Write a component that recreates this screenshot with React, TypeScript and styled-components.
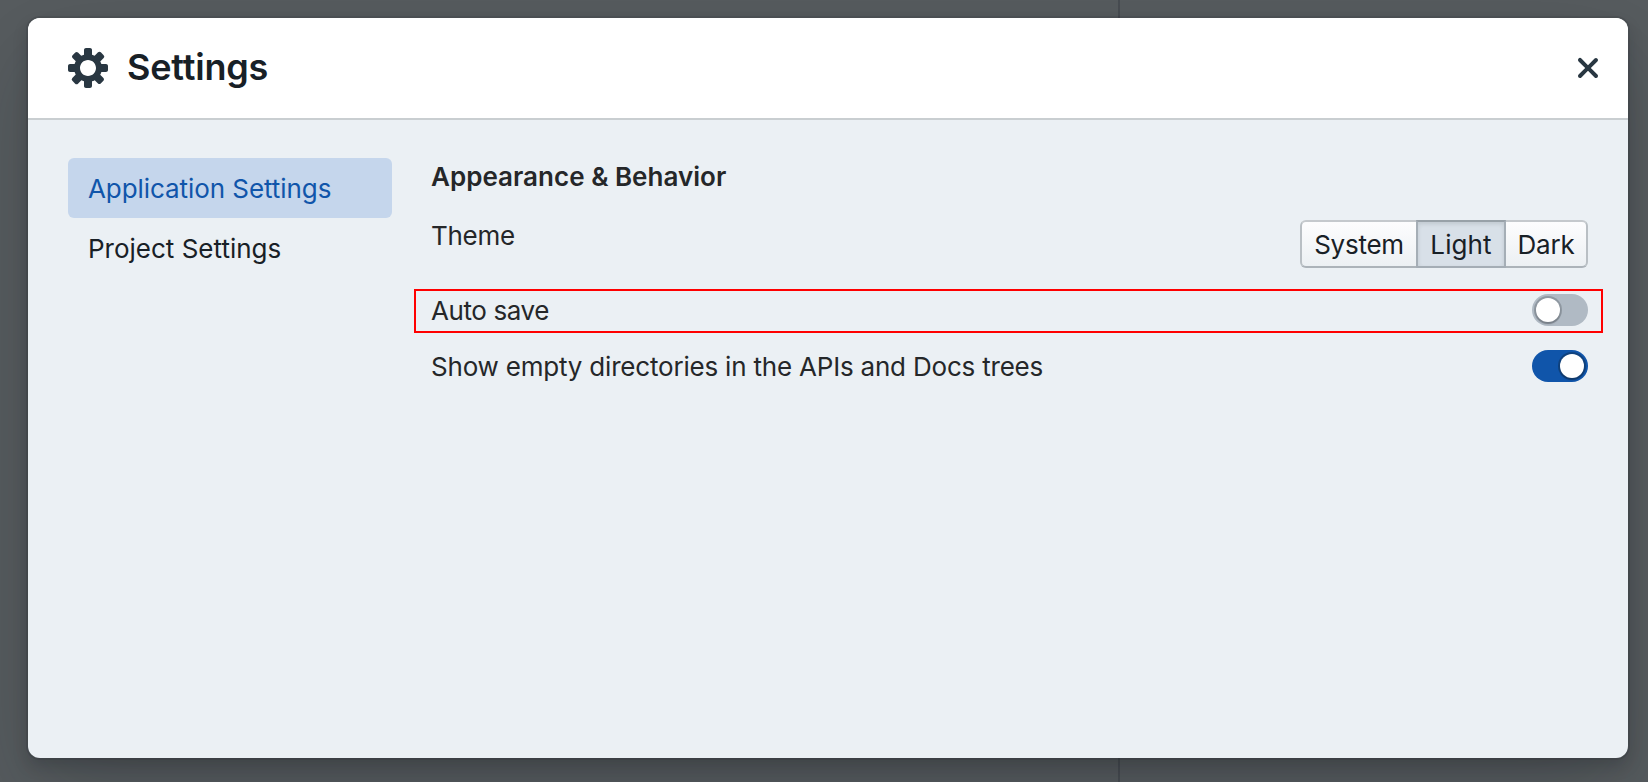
import React, { useState } from "react";
import styled, { createGlobalStyle, css } from "styled-components";

const GlobalStyle = createGlobalStyle`
  *, *::before, *::after { box-sizing: border-box; }
  body {
    margin: 0;
    overflow: hidden;
    font-family: Inter, "Liberation Sans", sans-serif;
    font-size: 26px;
    color: #252729;
  }
  button { font: inherit; letter-spacing: inherit; }
`;

const Backdrop = styled.main`
  height: 100vh;
  padding: 18px 20px 24px 28px;
  background: linear-gradient(to right, transparent 1118px, #484d52 1118px, #484d52 1120px, transparent 1120px) #575c5f;
`;

const Dialog = styled.section`
  display: flex;
  flex-direction: column;
  height: 740px;
  overflow: hidden;
  border-radius: 12px;
  background: #ebf0f4;
  box-shadow: 0 0 0 2px rgba(16, 22, 26, 0.1), 0 8px 16px rgba(16, 22, 26, 0.2), 0 36px 92px rgba(16, 22, 26, 0.2);
`;

const Header = styled.header`
  display: flex;
  align-items: center;
  height: 102px;
  flex: none;
  padding: 0 20px 0 40px;
  border-bottom: 2px solid #c9ced1;
  background: #fff;
  color: #293742;
`;

const Icon = styled.svg`
  display: block;
  width: 40px;
  height: 40px;
  fill: currentColor;
`;

const Title = styled.h1`
  flex: 1;
  margin: 0 0 2px 19px;
  font-size: 36px;
  line-height: 44px;
  font-weight: 600;
  letter-spacing: -0.2px;
  color: #182026;
`;

const CloseButton = styled.button`
  padding: 0;
  border: 0;
  background: none;
  color: inherit;
`;

const Body = styled.div`
  display: flex;
  gap: 39px;
  flex: 1;
  padding: 38px 40px 0;
`;

const Sidebar = styled.nav`
  display: flex;
  flex-direction: column;
  width: 324px;
  flex: none;
`;

const NavItem = styled.button<{ $active: boolean; $tracking: string }>`
  height: 60px;
  padding: 1px 20px 0;
  border: 0;
  border-radius: 6px;
  text-align: left;
  letter-spacing: ${(p) => p.$tracking};
  background: ${(p) => (p.$active ? "#c5d6ec" : "transparent")};
  color: ${(p) => (p.$active ? "#1055aa" : "#182026")};
`;

const Panel = styled.div`
  flex: 1;
`;

const SectionTitle = styled.h2`
  margin: 0;
  padding-top: 1px;
  font-size: 26px;
  line-height: 36px;
  font-weight: 600;
  letter-spacing: 0.02px;
`;

const SettingRow = styled.div<{ $highlighted?: boolean }>`
  display: flex;
  align-items: center;
  justify-content: space-between;
  ${(p) =>
    p.$highlighted &&
    css`
      height: 44px;
      margin: 21px -15px 17px -17px;
      padding: 0 13px 2px 15px;
      border: 2px solid #ff0000;
    `}
`;

const Label = styled.span<{ $tracking: string }>`
  line-height: 30px;
  padding-top: 2px;
  letter-spacing: ${(p) => p.$tracking};
`;

const ThemeRow = styled(SettingRow)`
  align-items: flex-start;
  margin-top: 25px;
  ${Label} {
    padding-top: 1px;
  }
`;

const ButtonGroup = styled.div`
  display: flex;
  height: 48px;
`;

const Segment = styled.button<{ $selected: boolean; $width: number }>`
  width: ${(p) => p.$width}px;
  margin-left: -2px;
  padding: 1px 0 0;
  border: 2px solid;
  border-color: #c5c9cd #b9bfc4 #acb3b9;
  background: linear-gradient(to bottom, #fdfdfe, #ecf0f3);
  color: #182026;
  letter-spacing: -0.25px;
  &:first-child {
    margin-left: 0;
    border-radius: 6px 0 0 6px;
  }
  &:last-child {
    border-radius: 0 6px 6px 0;
  }
  ${(p) =>
    p.$selected &&
    css`
      position: relative;
      border-color: #98a1a8 #a5aeb6 #a4adb5;
      background: #d8e0e8;
      box-shadow: inset 0 2px 4px rgba(16, 22, 26, 0.12);
      letter-spacing: 0.1px;
    `}
`;

const Track = styled.button<{ $on: boolean }>`
  display: flex;
  align-items: center;
  justify-content: ${(p) => (p.$on ? "flex-end" : "flex-start")};
  width: 56px;
  height: 32px;
  padding: 0 4px;
  border: 0;
  border-radius: 16px;
  background: ${(p) => (p.$on ? "#1055aa" : "#b0bac4")};
`;

const Thumb = styled.span<{ $on: boolean }>`
  width: 24px;
  height: 24px;
  border-radius: 50%;
  background: #fff;
  box-shadow: 0 0 0 2px ${(p) => (p.$on ? "rgba(16, 22, 26, 0.3)" : "rgba(16, 22, 26, 0.2)")}, 0 2px 2px rgba(16, 22, 26, 0.2);
`;

function Switch({ on, onChange, label }: { on: boolean; onChange: () => void; label: string }) {
  return (
    <Track $on={on} role="switch" aria-checked={on} aria-label={label} onClick={onChange}>
      <Thumb $on={on} />
    </Track>
  );
}

const pages = [
  { name: "Application Settings", tracking: "-0.07px" },
  { name: "Project Settings", tracking: "0px" },
];

const themes = [
  { name: "System", width: 118 },
  { name: "Light", width: 90 },
  { name: "Dark", width: 84 },
];

export default function App() {
  const [page, setPage] = useState("Application Settings");
  const [theme, setTheme] = useState("Light");
  const [autoSave, setAutoSave] = useState(false);
  const [showEmpty, setShowEmpty] = useState(true);

  return (
    <>
      <GlobalStyle />
      <Backdrop>
        <Dialog role="dialog">
          <Header>
            <Icon viewBox="0 0 20 20">
              <path
                fillRule="evenodd"
                d="M19 8h-2.31c-.14-.46-.33-.89-.56-1.3l1.7-1.7a.996.996 0 000-1.41l-1.41-1.41a.996.996 0 00-1.41 0l-1.7 1.7c-.41-.22-.84-.41-1.3-.55V1c0-.55-.45-1-1-1H9c-.55 0-1 .45-1 1v2.33c-.48.14-.94.34-1.37.58L5 2.28a.972.972 0 00-1.36 0L2.28 3.64c-.37.38-.37.99 0 1.36L3.9 6.62c-.24.44-.44.89-.59 1.38H1c-.55 0-1 .45-1 1v2c0 .55.45 1 1 1h2.31c.14.46.33.89.56 1.3L2.17 15a.996.996 0 000 1.41l1.41 1.41c.39.39 1.02.39 1.41 0l1.7-1.7c.41.22.84.41 1.3.55V19c0 .55.45 1 1 1h2c.55 0 1-.45 1-1v-2.33c.48-.14.94-.35 1.37-.59L15 17.72c.37.37.98.37 1.36 0l1.36-1.36c.37-.37.37-.98 0-1.36l-1.62-1.62c.24-.43.45-.89.6-1.38H19c.55 0 1-.45 1-1V9c0-.55-.45-1-1-1zm-9 6c-2.21 0-4-1.79-4-4s1.79-4 4-4 4 1.79 4 4-1.79 4-4 4z"
              />
            </Icon>
            <Title>Settings</Title>
            <CloseButton aria-label="Close">
              <Icon viewBox="0 0 20 20">
                <path d="M11.41 10l3.29-3.29c.19-.18.3-.43.3-.71a1.003 1.003 0 00-1.71-.71L10 8.59l-3.29-3.3a1.003 1.003 0 00-1.42 1.42L8.59 10 5.3 13.29c-.19.18-.3.43-.3.71a1.003 1.003 0 001.71.71l3.29-3.3 3.29 3.29c.18.19.43.3.71.3a1.003 1.003 0 00.71-1.71L11.41 10z" />
              </Icon>
            </CloseButton>
          </Header>
          <Body>
            <Sidebar>
              {pages.map((p) => (
                <NavItem key={p.name} $active={p.name === page} $tracking={p.tracking} onClick={() => setPage(p.name)}>
                  {p.name}
                </NavItem>
              ))}
            </Sidebar>
            <Panel>
              <SectionTitle>Appearance &amp; Behavior</SectionTitle>
              <ThemeRow>
                <Label $tracking="-0.27px">Theme</Label>
                <ButtonGroup>
                  {themes.map((t) => (
                    <Segment key={t.name} $width={t.width} $selected={t.name === theme} onClick={() => setTheme(t.name)}>
                      {t.name}
                    </Segment>
                  ))}
                </ButtonGroup>
              </ThemeRow>
              <SettingRow $highlighted>
                <Label $tracking="-0.4px">Auto save</Label>
                <Switch label="Auto save" on={autoSave} onChange={() => setAutoSave(!autoSave)} />
              </SettingRow>
              <SettingRow>
                <Label $tracking="-0.2px">Show empty directories in the APIs and Docs trees</Label>
                <Switch label="Show empty directories" on={showEmpty} onChange={() => setShowEmpty(!showEmpty)} />
              </SettingRow>
            </Panel>
          </Body>
        </Dialog>
      </Backdrop>
    </>
  );
}
